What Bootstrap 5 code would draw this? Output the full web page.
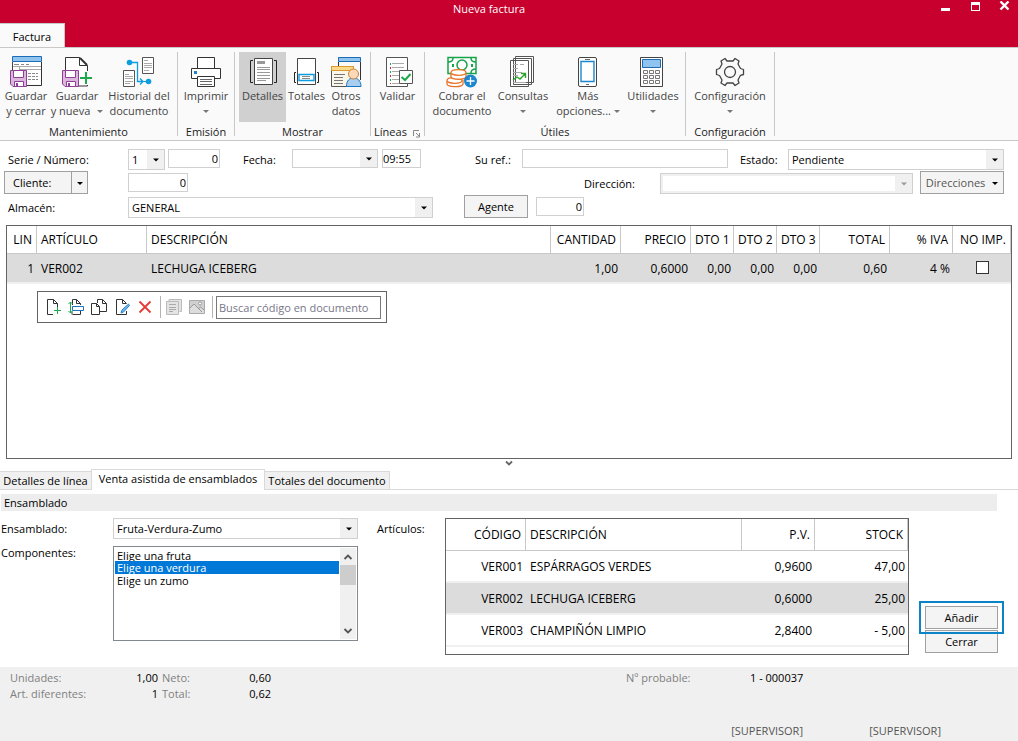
<!DOCTYPE html>
<html lang="es">
<head>
<meta charset="utf-8">
<meta name="viewport" content="width=device-width, initial-scale=1">
<title>Nueva factura</title>
<link href="https://cdn.jsdelivr.net/npm/bootstrap@5.3.0/dist/css/bootstrap.min.css" rel="stylesheet">
<style>
:root{--brand:#c8002d;--line:#c8c8c8;--soft:#f0f0f0;--frame:#646464}
body{font:11px/16px "Open Sans","Noto Sans",sans-serif;color:#000;background:#fff}
button,input,select{font:inherit;color:inherit}
button{padding:0;border:0;background:none}
.titlebar{background:var(--brand);height:23px}
.titlebar .caption{padding-left:57px;line-height:18px;color:#fff}
.winbtns{width:97px}
.winbtns button{width:30px;height:14px;color:#fff;line-height:0}
.tabstrip{background:var(--brand);height:24px}
.tabstrip a{background:#fafafa;color:#000;width:65px;border-top:1px solid var(--line);border-right:1px solid var(--line);line-height:25px}
.ribbon{background:#fafafa;border-top:1px solid var(--line);border-bottom:1px solid var(--line);height:94px;padding:4px 0}
.rgroup{border-right:1px solid var(--line);flex-shrink:0}
.rgroup .gname{height:14px;line-height:20px;color:#222}
.g1{width:178px}.g2{width:57px}.g3{width:136px}.g4{width:54px}.g5{width:261px}.g6{width:89px}
.rbtn{display:flex;flex-direction:column;align-items:center;justify-content:flex-start;flex-shrink:0;color:#444;line-height:15px;height:70px;padding-top:4px;text-align:center;white-space:nowrap}
.rbtn.active{background:#d0d0d0}
.rbtn svg.pic{width:32px;height:32px;flex-shrink:0}
.dd{display:inline-block;border:3px solid transparent;border-top-color:#777;border-bottom:0;vertical-align:2px}
.dd.dark{border-top-color:#000}
.w38{width:38px}.w40{width:41px}.w47{width:47px}.w48{width:48px}.w50{width:50px}.w52{width:52px}.w53{width:53px}.w56{width:56px}.w64{width:64px}.w74{width:74px}.w88{width:88px}
.docform{padding:6px 14px 6px 8px}
.frow{height:24px}
.frow label{line-height:26px}
.c-lab{width:120px}
.fld{height:19px;border:1px solid #d0d0d0;border-radius:0;padding:0 4px;background:#fff;min-width:0;margin-top:2px}
.fld.num{text-align:right;padding:0 1px}
.form-select.cmb{height:21px;min-height:0;margin-top:2px;padding:0 18px 0 3px;font-size:11px;line-height:19px;color:#000;border:1px solid #d0d0d0;border-radius:0;min-width:0;background:url("data:image/svg+xml,%3Csvg xmlns='http://www.w3.org/2000/svg' width='17' height='40'%3E%3Cpath fill='%23f0f0f0' d='M0 0h17v40H0z'/%3E%3Cpath d='M6 19h6l-3 3z'/%3E%3C/svg%3E") right center/17px 40px no-repeat #fff}
.form-select.cmb.low{height:19px;line-height:17px}
.form-select.cmb:disabled{background-image:url("data:image/svg+xml,%3Csvg xmlns='http://www.w3.org/2000/svg' width='17' height='40'%3E%3Cpath fill='%23f0f0f0' d='M0 0h17v40H0z'/%3E%3Cpath fill='%23999' d='M6 19h6l-3 3z'/%3E%3C/svg%3E");box-shadow:inset 0 0 0 2px var(--soft)}
.pbtn{height:23px;border:1px solid #a0a0a0;background:#f4f4f4;line-height:22px;text-align:center;white-space:nowrap}
.gridbox{border:1px solid var(--frame);margin:0 6px}
.grid{width:100%;table-layout:fixed;border-collapse:separate;border-spacing:0;margin:0;white-space:nowrap;font-size:12px}
.grid th{font-weight:400;border-right:1px solid var(--line);border-bottom:1px solid var(--line);height:28px;padding:0 4px;overflow:hidden}
.grid td{height:30px;padding:2px 3px 0 4px;border-bottom:2px solid var(--soft)}
.grid .sel{background:#dcdcdc}
.grid td.num,.grid th.num{text-align:right}
.grid.items th,.grid.items td{height:32px}
.c30{width:30px}.c43{width:43px}.c58{width:58px}.c63{width:63px}.c70{width:70px}.c73{width:73px}.c80{width:80px}.c93{width:93px}.c110{width:110px}
.tick{appearance:none;width:13px;height:13px;border:1px solid #333;background:#fff;display:inline-block;vertical-align:middle;margin:0 0 4px}
.tick:checked{background:#333}
.minibar{width:350px;height:32px;border:1px solid var(--frame);margin:7px 0 0 30px;padding-left:7px;background:#fff}
.minibar button{width:16px;height:16px;margin-right:7px;line-height:0}
.minibar .vline{width:1px;height:22px;background:#b4b4b4}
.minibar input{width:165px;height:23px;border:1px solid #787878;padding:0 2px}
.minibar input::placeholder{color:#778;opacity:1}
.fold{height:10px;line-height:0}
.dtabs{border-bottom:1px solid #d9d9d9;height:21px}
.dtabs a{color:#000;background:var(--soft);border:1px solid #d9d9d9;border-bottom:0;height:18px;line-height:18px;text-align:center;white-space:nowrap}
.dtabs a.active{background:#fff;height:21px;margin:0 0 -1px;width:174px}
.dtabs .t1{width:91px;border-left:0;border-right:0}
.dtabs .t3{width:125px;border-left:0}
.section{background:#ededed;height:17px;line-height:18px;padding-left:3px;margin:4px 21px 7px 1px}
.assist{padding:0 14px 12px 1px}
.assist .cmb{margin-top:0}
.lab112{width:112px;line-height:21px}
.lab112.tall{line-height:27px}
.w245{width:245px}
.listbox{width:245px;height:95px;border:1px solid #828790;padding:1px;margin-top:7px}
.listbox .list-group{padding-top:1px}
.listbox .list-group-item{border:0;border-radius:0;margin:0;padding:0 2px;line-height:13px;height:13px;color:#000;background:none}
.listbox .list-group-item.active{background:#0078d7;color:#fff}
.sbar{width:16px;background:var(--soft);margin-left:1px}
.sbar .thumb{height:20px;background:#cdcdcd}
.sbar button{height:17px;line-height:0}
.itembox{border:1px solid var(--frame);height:137px;width:0}
.lab87{width:87px;padding-left:19px;line-height:22px;flex-shrink:0}
.actions{width:85px;margin:83px 0 0 10px;flex-shrink:0}
.focusring{border:2px solid #0a84c6;padding:3px 4px;margin-bottom:-4px}
.actions .second{margin:0 6px}
.status{background:var(--soft);height:74px;padding:3px 10px 2px;color:#808080}
.status b{font-weight:400;color:#000;text-align:right}
.s1{width:96px}.s2{width:52px}.s3{width:57px}.s4{width:124px}.s5{width:355px}.s6{width:138px}
.status .users{color:#555;padding-right:67px}
</style>
</head>
<body>
<div class="d-flex flex-column min-vh-100">
<header>
 <div class="titlebar d-flex">
  <div class="caption flex-fill text-center">Nueva factura</div>
  <div class="winbtns d-flex">
   <button type="button" aria-label="Minimizar" class="ms-2"><svg width="16" height="12"><path d="M5 7h9v3H5z" fill="#fff"/></svg></button>
   <button type="button" aria-label="Maximizar"><svg width="16" height="12"><path d="M5 1h9v9H5zM6 4v5h7V4z" fill="#fff" fill-rule="evenodd"/></svg></button>
   <button type="button" aria-label="Cerrar ventana"><svg width="16" height="12"><path d="M5.500.5l8 8M13.500.5l-8 8" stroke="#fff" stroke-width="2.400"/></svg></button>
  </div>
 </div>
 <nav class="tabstrip d-flex"><a href="#" class="text-decoration-none text-center">Factura</a></nav>
 <div class="ribbon d-flex">
  <div class="rgroup g1 text-center">
   <div class="d-flex">
    <button type="button" class="rbtn w52"><svg class="pic" viewBox="0 0 32 32" fill="none"><path d="M3 6h28v22H3z" fill="#fff"/><path d="M2.500 6v9" stroke="#444"/><path d="M2.500.5h29v5h-29z" fill="#90c3ee" stroke="#1c6bb5"/><path d="M4 8.500h5m2 0h3m2 0h3" stroke="#888"/><path d="M3 10.500h28M9.500 11v3M9.500 13.500H31" stroke="#aaa"/><path d="M18 17.500h10M18 20.500h10M18 23.500h10" stroke="#888" stroke-dasharray="3 1"/><path d="M31.500 6v23.500H17" stroke="#333"/><path d="M.5 14.500h16v16H3l-2.500-2.500z" fill="#ddb6dd" stroke="#8f3e97"/><path d="M3.500 14.500h10v7h-10z" fill="#fff" stroke="#8f3e97"/><path d="M4.500 25.500h9v5h-9z" fill="#fff" stroke="#8f3e97"/><path d="M6 27h2v3H6z" fill="#8f3e97"/></svg><span>Guardar<br>y cerrar</span></button>
    <button type="button" class="rbtn w50"><svg class="pic" viewBox="0 0 32 32" fill="none"><path d="M4.500 30V1.500h14l8 8V30H14" fill="#fff" stroke="#333"/><path d="M18.500 1.500v8h8" stroke="#333"/><path d="M19 2l7 7" stroke="#333" stroke-width="2"/><path d="M1.500 14.500h16v16H4l-2.500-2.500z" fill="#ddb6dd" stroke="#8f3e97"/><path d="M4.500 14.500h10v7h-10z" fill="#fff" stroke="#8f3e97"/><path d="M5.500 25.500h9v5h-9z" fill="#fff" stroke="#8f3e97"/><path d="M7 27h2v3H7z" fill="#8f3e97"/><path d="M25 15v14M18 22.500h13" stroke="#fafafa" stroke-width="4"/><path d="M25 16v12M19 22h12" stroke="#1ba94c" stroke-width="2"/></svg><span>Guardar<br>y nueva <span class="dd ms-1"></span></span></button>
    <button type="button" class="rbtn w74"><svg class="pic" viewBox="0 0 32 32" fill="none"><path d="M19.500 1.500h11v16h-11zM.5 14.500h11v16H.5z" fill="#fff" stroke="#555"/><path d="M21 4.500h4M21 7.500h8M21 9.500h8M21 11.500h8M21 14.500h5M2 18.500h4M2 20.500h8M2 22.500h8M2 25.500h8M2 27.500h5" stroke="#aaa"/><path d="M5 6.500h9.500v19H20m-3-3l3 3-3 3" stroke="#0d9de0" stroke-width="1.300"/><circle cx="6.500" cy="6.500" r="2.800" fill="#0d9de0"/><circle cx="25.500" cy="25.500" r="2.800" fill="#0d9de0"/><path d="M20 25.500h4" stroke="#0d9de0"/></svg><span>Historial del<br>documento</span></button>
   </div>
   <div class="gname">Mantenimiento</div>
  </div>
  <div class="rgroup g2 text-center">
   <button type="button" class="rbtn w56"><svg class="pic" viewBox="0 0 32 32" fill="none"><path d="M7.500 12V1.500h17V12M7 22.500H1.500v-10h29v10H25" fill="#fff" stroke="#333"/><path d="M7.500 20.500h17v10h-17z" fill="#fff" stroke="#333"/><path d="M10 23.500h12M10 25.500h12M10 28.500h12" stroke="#666"/><path d="M4 15h3v3H4z" fill="#1c7fd0"/></svg><span>Imprimir<br><span class="dd"></span></span></button>
   <div class="gname">Emisión</div>
  </div>
  <div class="rgroup g3 text-center">
   <div class="d-flex ps-1">
    <button type="button" class="rbtn w47 active"><svg class="pic" viewBox="0 0 32 32" fill="none"><path d="M7.500 2.500h18v26h-18z" fill="#fff" stroke="#444"/><path d="M10 5h8v3h-8z" fill="#999"/><path d="M10 11.500h13M10 13.500h13M10 16.500h13M10 19.500h13M10 22.500h13M10 24.500h9" stroke="#999"/><path d="M6 4.500H3.500v22H6M27 4.500h2.500v22H27" stroke="#222"/></svg><span>Detalles</span></button>
    <button type="button" class="rbtn w40"><svg class="pic" viewBox="0 0 32 32" fill="none"><path d="M6.500 2.500h18v26h-18z" fill="#fff" stroke="#444"/><path d="M8 18.500h15v6H8z" stroke="#0d9de0" stroke-width="1.400"/><path d="M11 20.500h8M11 22.500h8" stroke="#888"/><path d="M5 16.500H3.500v10H5M26 16.500h1.500v10H26" stroke="#222"/></svg><span>Totales</span></button>
    <button type="button" class="rbtn w38"><svg class="pic" viewBox="0 0 32 32" fill="none"><path d="M8.500 6v4M30.500 6v18" stroke="#333"/><path d="M8.500 1.500h22v4h-22z" fill="#90c3ee" stroke="#1c6bb5"/><path d="M1.500 10.500h22v20h-22z" fill="#fbf6ea" stroke="#555"/><path d="M1.500 10.500h22v4h-22z" fill="#f9d98c" stroke="#dc9b2d"/><path d="M4 18.500h11M4 21.500h9M4 24.500h9M4 27.500h9" stroke="#777"/><path d="M16.500 30.500c0-6 3-8.500 7-8.500s7.500 2.500 7.500 8.500z" fill="#a9cef0" stroke="#1c75bf"/><circle cx="23.500" cy="18" r="5" fill="#fbd9b8" stroke="#c8823c"/></svg><span>Otros<br>datos</span></button>
   </div>
   <div class="gname">Mostrar</div>
  </div>
  <div class="rgroup g4 text-center">
   <button type="button" class="rbtn w53"><svg class="pic" viewBox="0 0 32 32" fill="none"><path d="M4.500 1.500h21v29h-21z" fill="#fff" stroke="#555"/><path d="M10 7.500h12M10 11.500h12M10 15.500h8M10 19.500h8M10 23.500h8M10 27.500h8" stroke="#aaa"/><path d="M8 7h1v2H8zM8 15h1v2H8zM8 23h1v2H8z" fill="#1ba94c"/><path d="M8 11h1v2H8zM8 19h1v2H8zM8 27h1v1H8z" fill="#d22"/><path d="M17.500 14.500h13v13h-13z" fill="#fff" stroke="#555"/><path d="M19.500 21l3.500 3 5.500-6" stroke="#1ba94c" stroke-width="2"/></svg><span>Validar</span></button>
   <div class="gname d-flex justify-content-center">Líneas<svg class="ms-1 mt-2" width="10" height="8" fill="none"><path d="M2.500 6V.5H8M5 3l3 3M8.500 3v4H5" stroke="#888"/></svg></div>
  </div>
  <div class="rgroup g5 text-center">
   <div class="d-flex">
    <button type="button" class="rbtn w74"><svg class="pic" viewBox="0 0 32 32" fill="none"><path d="M2 1.500h28v16H2z" fill="#fff" stroke="#17a34a" stroke-width="1.500"/><path d="M2 6c3 0 5-1 5-4M25 2c0 3 2 4 5 4M25 17c0-3 2-4 5-4" stroke="#17a34a" stroke-width="1.500"/><circle cx="16" cy="9" r="5" stroke="#17a34a" stroke-width="1.500"/><path d="M7 8v3M26 8v3" stroke="#17a34a" stroke-width="2"/><g fill="#fff" stroke="#e87428" stroke-width="1.300"><path d="M1 25v3c0 3 15 4 16 0v-4"/><ellipse cx="8.500" cy="24.500" rx="7.500" ry="2.800"/><path d="M5 17v4c1 3 14 3 15 0v-4"/><ellipse cx="12.500" cy="16.500" rx="7.500" ry="2.800"/></g><circle cx="24.500" cy="25" r="6.500" fill="#1c86cf"/><path d="M24.500 21v8M20.500 25h8" stroke="#fff" stroke-width="1.300"/></svg><span>Cobrar el<br>documento</span></button>
    <button type="button" class="rbtn w48"><svg class="pic" viewBox="0 0 32 32" fill="none"><path d="M8.500.5h18v26h-18zM6.500 2.500h18v26h-18zM3.500 4.500h18v26h-18z" fill="#fff" stroke="#555"/><path d="M6 8.500h5m2 0h4M6 12.500h5M6 16.500h9M6 19.500h5M6 26.500h13" stroke="#aaa"/><path d="M6 24l4-3 3 2 5-5M14 17.500h4.500V22" stroke="#27a52d" stroke-width="1.400"/></svg><span>Consultas<br><span class="dd"></span></span></button>
    <button type="button" class="rbtn w74 ms-1"><svg class="pic" viewBox="0 0 32 32" fill="none"><rect x="6.500" y="1.500" width="18" height="29" rx="1.500" fill="#fff" stroke="#444"/><path d="M9 5.500h13v20H9z" stroke="#1c86cf" stroke-width="1.400"/><path d="M13 3.500h5M14 28.500h3" stroke="#666"/></svg><span>Más<br>opciones... <span class="dd"></span></span></button>
    <button type="button" class="rbtn w56"><svg class="pic" viewBox="0 0 32 32" fill="none"><path d="M3.500 1.500h22v29h-22z" fill="#fff" stroke="#444"/><path d="M5.500 3.500h18v8h-18z" fill="#90c3ee" stroke="#1c6bb5"/><path d="M6.500 14.500h4v3h-4zm6 0h4v3h-4zm6 0h4v3h-4zm-12 5h4v3h-4zm6 0h4v3h-4zm6 0h4v3h-4zm-12 5h4v3h-4zm6 0h4v3h-4zm6 0h4v3h-4z" stroke="#777"/></svg><span>Utilidades<br><span class="dd"></span></span></button>
   </div>
   <div class="gname">Útiles</div>
  </div>
  <div class="rgroup g6 text-center">
   <button type="button" class="rbtn w88"><svg class="pic" viewBox="0 0 32 32" fill="none" stroke="#444" stroke-width="1.300"><path d="M7 5l4-2.500 2 2.500h6l2-2.500L25 5l-1 3 2.500 4.500 3 1v5l-3 .8L24 24l1 3-4 2.500-2-2.500h-6l-2 2.500L7 27l1-3-2.500-4.500-3-1v-5l3-1L8 8z" stroke-linejoin="round"/><circle cx="16" cy="16" r="5.500"/></svg><span>Configuración<br><span class="dd"></span></span></button>
   <div class="gname">Configuración</div>
  </div>
 </div>
</header>

<form class="docform">
 <div class="frow d-flex align-items-start">
  <label for="serie" class="c-lab">Serie / Número:</label>
  <select id="serie" class="form-select cmb" style="width:37px"><option>1</option></select>
  <input aria-label="Número" class="fld num" style="width:52px;margin-left:3px" value="0">
  <label for="fecha" style="width:72px;padding-left:23px">Fecha:</label>
  <select id="fecha" class="form-select cmb low" style="width:86px"><option></option></select>
  <input aria-label="Hora" class="fld ms-1 px-0" style="width:39px" value="09:55">
  <label for="ref" style="width:101px;padding-left:54px">Su ref.:</label>
  <input id="ref" class="fld flex-fill" style="width:60px">
  <label for="estado" style="width:60px;padding-left:12px">Estado:</label>
  <select id="estado" class="form-select cmb flex-fill" style="width:70px"><option>Pendiente</option></select>
 </div>
 <div class="frow d-flex align-items-start">
  <div class="d-flex" style="width:124px;margin-left:-4px">
   <button type="button" class="pbtn text-start ps-2" style="width:68px">Cliente:</button>
   <button type="button" class="pbtn border-start-0" style="width:16px" aria-label="Opciones de cliente"><span class="dd dark"></span></button>
  </div>
  <input aria-label="Código de cliente" class="fld num" style="width:60px" value="0">
  <label for="direccion" class="ms-auto" style="width:76px">Dirección:</label>
  <select id="direccion" class="form-select cmb" style="width:253px" disabled><option></option></select>
  <button type="button" class="pbtn" style="width:84px;margin-left:7px;color:#555">Direcciones <span class="dd dark ms-1"></span></button>
 </div>
 <div class="frow d-flex align-items-start">
  <label for="almacen" class="c-lab">Almacén:</label>
  <select id="almacen" class="form-select cmb" style="width:305px"><option>GENERAL</option></select>
  <button type="button" class="pbtn w64" style="margin-left:31px">Agente</button>
  <input aria-label="Agente" class="fld num ms-2" style="width:48px" value="0">
 </div>
</form>

<main class="d-flex flex-column flex-fill">
 <div class="gridbox flex-fill">
  <table class="grid">
   <colgroup><col class="c30"><col class="c110"><col><col class="c70"><col class="c70"><col class="c43"><col class="c43"><col class="c43"><col class="c70"><col class="c63"><col class="c58"></colgroup>
   <thead><tr><th class="num">LIN</th><th>ARTÍCULO</th><th>DESCRIPCIÓN</th><th class="num">CANTIDAD</th><th class="num">PRECIO</th><th class="num">DTO 1</th><th class="num">DTO 2</th><th class="num">DTO 3</th><th class="num">TOTAL</th><th class="num">% IVA</th><th class="num">NO IMP.</th></tr></thead>
   <tbody><tr class="sel"><td class="num">1</td><td>VER002</td><td>LECHUGA ICEBERG</td><td class="num">1,00</td><td class="num">0,6000</td><td class="num">0,00</td><td class="num">0,00</td><td class="num">0,00</td><td class="num">0,60</td><td class="num">4 %</td><td class="text-center"><input type="checkbox" class="tick" aria-label="No imprimir"></td></tr></tbody>
  </table>
  <div class="minibar d-flex align-items-center">
   <button type="button" aria-label="Nueva línea"><svg width="16" height="16" fill="none"><path d="M8 15.500H2.500V.5h6l4 4V8M8.500.5v4h4" stroke="#333"/><path d="M12.500 8v7M9 11.500h7" stroke="#1ba94c"/></svg></button>
   <button type="button" aria-label="Insertar línea"><svg width="16" height="16" fill="none"><path d="M4.500 15.500h8V12M4.500 6V.5h4l4 4V6M8.500.5v4h4M4 15.500v-3" stroke="#333"/><path d="M4.500 7.500h11v4h-11z" fill="#fff" stroke="#1c75bf"/><path d="M2.500 3v11M.5 5l2-2 2 2M.5 12l2 2 2-2" stroke="#1ba94c"/></svg></button>
   <button type="button" aria-label="Duplicar línea"><svg width="16" height="16" fill="none"><path d="M.5 4.500h5l3 3v8h-8zM5.500 4.500v3h3M6.500 4V.5h5l4 4v8H9M11.500.5v4h4" stroke="#333"/></svg></button>
   <button type="button" aria-label="Modificar línea"><svg width="16" height="16" fill="none"><path d="M12.500 12v3.500h-10V.5h6l4 4M8.500.5v4h4" stroke="#333"/><path d="M7 14l1-3 6.500-6 1 1.500L9.500 13z" fill="#6fb4ea" stroke="#2c83cc"/></svg></button>
   <button type="button" aria-label="Eliminar línea"><svg width="16" height="16"><path d="M2.500 2.500l11 11M13.500 2.500l-11 11" stroke="#e63a35" stroke-width="1.800"/></svg></button>
   <div class="vline" style="margin-right:5px"></div>
   <button type="button" aria-label="Notas" disabled><svg width="16" height="16" fill="none"><path d="M3 2.500V.5h12.500v12h-2M.5 2.500h12v13H.5z" fill="#e4e4e4" stroke="#bbb"/><path d="M3 5.500h7M3 8.500h7M3 10.500h7M3 12.500h4" stroke="#aaa"/></svg></button>
   <button type="button" aria-label="Imagen" disabled><svg width="16" height="16" fill="none"><path d="M.5 1.500h15v13H.5z" fill="#d0d0d0" stroke="#aaa"/><path d="M1 9l4-4 5 5 2-1.500 3 3V14H1z" fill="#ddd"/><path d="M1 9l4-4 8 8M9 10l2.500-2L15 11" stroke="#999"/><circle cx="11" cy="4.500" r="1.500" fill="#fff" stroke="#999"/></svg></button>
   <div class="vline" style="margin-right:3px"></div>
   <input aria-label="Buscar" placeholder="Buscar código en documento">
  </div>
 </div>
 <div class="fold text-center"><button type="button" aria-label="Plegar"><svg width="8" height="8" fill="none"><path d="M1 2.500l3 3 3-3" stroke="#666" stroke-width="1.800"/></svg></button></div>
 <nav class="dtabs d-flex align-items-end">
  <a href="#" class="t1 text-decoration-none">Detalles de línea</a>
  <a href="#" class="active text-decoration-none" aria-current="page">Venta asistida de ensamblados</a>
  <a href="#" class="t3 text-decoration-none">Totales del documento</a>
 </nav>
 <div class="section">Ensamblado</div>
 <div class="assist d-flex align-items-start">
  <div>
   <div class="d-flex"><label for="ens" class="lab112">Ensamblado:</label><select id="ens" class="form-select cmb w245"><option>Fruta-Verdura-Zumo</option></select></div>
   <div class="d-flex"><div class="lab112 tall" id="complab">Componentes:</div>
    <div class="listbox d-flex">
     <div class="list-group flex-fill" role="listbox" aria-labelledby="complab">
      <button type="button" role="option" class="list-group-item list-group-item-action">Elige una fruta</button>
      <button type="button" role="option" aria-selected="true" class="list-group-item list-group-item-action active">Elige una verdura</button>
      <button type="button" role="option" class="list-group-item list-group-item-action">Elige un zumo</button>
     </div>
     <div class="sbar d-flex flex-column">
      <button type="button" aria-label="Subir"><svg width="10" height="8" fill="none"><path d="M1.500 6L5 2.500 8.500 6" stroke="#555" stroke-width="1.800"/></svg></button>
      <div class="thumb"></div>
      <button type="button" class="mt-auto" aria-label="Bajar"><svg width="10" height="8" fill="none"><path d="M1.500 2L5 5.500 8.500 2" stroke="#555" stroke-width="1.800"/></svg></button>
     </div>
    </div>
   </div>
  </div>
  <div class="lab87">Artículos:</div>
  <div class="itembox flex-fill">
   <table class="grid items">
    <colgroup><col class="c80"><col><col class="c73"><col class="c93"></colgroup>
    <thead><tr><th class="num">CÓDIGO</th><th>DESCRIPCIÓN</th><th class="num">P.V.</th><th class="num">STOCK</th></tr></thead>
    <tbody>
     <tr><td class="num">VER001</td><td>ESPÁRRAGOS VERDES</td><td class="num">0,9600</td><td class="num">47,00</td></tr>
     <tr class="sel"><td class="num">VER002</td><td>LECHUGA ICEBERG</td><td class="num">0,6000</td><td class="num">25,00</td></tr>
     <tr><td class="num">VER003</td><td>CHAMPIÑÓN LIMPIO</td><td class="num">2,8400</td><td class="num">- 5,00</td></tr>
    </tbody>
   </table>
  </div>
  <div class="actions d-flex flex-column">
   <div class="focusring d-flex position-relative z-1"><button type="button" class="pbtn flex-fill">Añadir</button></div>
   <button type="button" class="pbtn second">Cerrar</button>
  </div>
 </div>
</main>

<footer class="status d-flex flex-column">
 <div class="d-flex"><span class="s1">Unidades:</span><b class="s2 me-1">1,00</b><span class="s3">Neto:</span><b class="s2">0,60</b><span class="s5"></span><span class="s4">Nº probable:</span><b>1 - 000037</b></div>
 <div class="d-flex"><span class="s1">Art. diferentes:</span><b class="s2 me-1">1</b><span class="s3">Total:</span><b class="s2">0,62</b></div>
 <div class="users d-flex mt-auto justify-content-end"><span class="s6">[SUPERVISOR]</span><span>[SUPERVISOR]</span></div>
</footer>
</div>
<script src="https://cdn.jsdelivr.net/npm/bootstrap@5.3.0/dist/js/bootstrap.bundle.min.js"></script>
</body>
</html>
